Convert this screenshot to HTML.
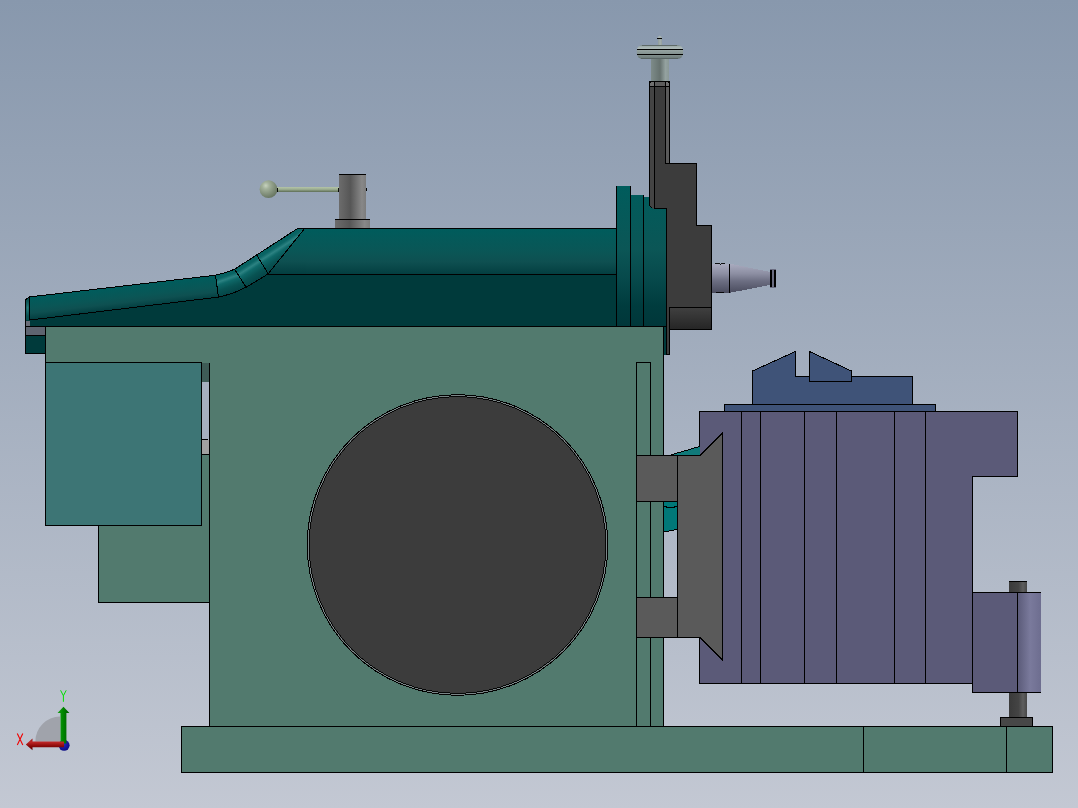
<!DOCTYPE html>
<html><head><meta charset="utf-8">
<style>
html,body{margin:0;padding:0;width:1078px;height:808px;overflow:hidden;}
body{background:linear-gradient(to bottom,#8898ad 0%,#c3c8d3 100%);font-family:"Liberation Sans",sans-serif;}
svg{position:absolute;left:0;top:0;}
</style></head><body>
<svg width="1078" height="808" viewBox="0 0 1078 808">
<defs>
<linearGradient id="ramTop" x1="0" y1="0" x2="0" y2="1">
<stop offset="0" stop-color="#005c5c"/><stop offset="0.5" stop-color="#0a5656"/><stop offset="0.72" stop-color="#0e5051"/><stop offset="1" stop-color="#033e40"/>
</linearGradient>
<linearGradient id="ramLeft" gradientUnits="userSpaceOnUse" x1="120" y1="286.4" x2="122.6" y2="309">
<stop offset="0" stop-color="#005c5c"/><stop offset="0.5" stop-color="#0a5656"/><stop offset="0.72" stop-color="#0e5051"/><stop offset="1" stop-color="#033e40"/>
</linearGradient>
<linearGradient id="bevel" gradientUnits="userSpaceOnUse" x1="225" y1="272.5" x2="232" y2="292.3">
<stop offset="0" stop-color="#04605f"/><stop offset="0.18" stop-color="#0b6565"/><stop offset="0.32" stop-color="#2c8282"/><stop offset="0.46" stop-color="#0e6868"/><stop offset="0.72" stop-color="#085353"/><stop offset="1" stop-color="#054648"/>
</linearGradient>
<linearGradient id="bevel2" gradientUnits="userSpaceOnUse" x1="258" y1="254" x2="269.6" y2="272.1">
<stop offset="0" stop-color="#04605f"/><stop offset="0.18" stop-color="#0b6565"/><stop offset="0.32" stop-color="#2c8282"/><stop offset="0.46" stop-color="#0e6868"/><stop offset="0.72" stop-color="#085353"/><stop offset="1" stop-color="#054648"/>
</linearGradient>
<linearGradient id="flange" gradientUnits="userSpaceOnUse" x1="0" y1="186" x2="0" y2="326">
<stop offset="0" stop-color="#005c5c"/><stop offset="0.45" stop-color="#0b5656"/><stop offset="0.65" stop-color="#074a4c"/><stop offset="0.85" stop-color="#003c3e"/><stop offset="1" stop-color="#00373a"/>
</linearGradient>
<linearGradient id="cone" x1="0" y1="0" x2="0" y2="1">
<stop offset="0" stop-color="#aaacc0"/><stop offset="0.35" stop-color="#8c8ea2"/><stop offset="0.6" stop-color="#6c6e82"/><stop offset="1" stop-color="#4a4c5e"/>
</linearGradient>
<linearGradient id="cylGray" x1="0" y1="0" x2="1" y2="0">
<stop offset="0" stop-color="#6c6c6c"/><stop offset="0.42" stop-color="#565656"/><stop offset="0.85" stop-color="#888888"/><stop offset="1" stop-color="#7c7c7c"/>
</linearGradient>
<linearGradient id="rod" x1="0" y1="0" x2="0" y2="1">
<stop offset="0" stop-color="#b4c4a8"/><stop offset="0.5" stop-color="#9cae92"/><stop offset="1" stop-color="#66765e"/>
</linearGradient>
<radialGradient id="ball" cx="0.35" cy="0.3" r="0.7">
<stop offset="0" stop-color="#c6d2be"/><stop offset="0.28" stop-color="#a2b09a"/><stop offset="1" stop-color="#6a7864"/>
</radialGradient>
<linearGradient id="shaft" x1="0" y1="0" x2="1" y2="0">
<stop offset="0" stop-color="#7e8c8a"/><stop offset="0.5" stop-color="#66726f"/><stop offset="0.8" stop-color="#94a2a0"/><stop offset="1" stop-color="#8a9896"/>
</linearGradient>
<linearGradient id="disk" x1="0" y1="0" x2="0" y2="1">
<stop offset="0" stop-color="#6e7c7a"/><stop offset="0.12" stop-color="#a2b0ae"/><stop offset="0.25" stop-color="#aebab8"/><stop offset="0.38" stop-color="#96a4a2"/><stop offset="0.55" stop-color="#8a9896"/><stop offset="0.75" stop-color="#7e8c8a"/><stop offset="0.9" stop-color="#72807e"/><stop offset="1" stop-color="#5e6a68"/>
</linearGradient>
<linearGradient id="post" x1="0" y1="0" x2="1" y2="0">
<stop offset="0" stop-color="#3a3a3a"/><stop offset="0.55" stop-color="#444"/><stop offset="0.8" stop-color="#5e5e5e"/><stop offset="1" stop-color="#4a4a4a"/>
</linearGradient>
<linearGradient id="rcyl" x1="0" y1="0" x2="1" y2="0">
<stop offset="0" stop-color="#5a5a78"/><stop offset="0.55" stop-color="#7a7a9c"/><stop offset="1" stop-color="#6e6e90"/>
</linearGradient>
<linearGradient id="greenArrow" x1="0" y1="0" x2="1" y2="0">
<stop offset="0" stop-color="#18a018"/><stop offset="0.45" stop-color="#008800"/><stop offset="1" stop-color="#005800"/>
</linearGradient>
<linearGradient id="redArrow" x1="0" y1="0" x2="0" y2="1">
<stop offset="0" stop-color="#901010"/><stop offset="0.3" stop-color="#c02828"/><stop offset="0.65" stop-color="#8a0808"/><stop offset="1" stop-color="#580000"/>
</linearGradient>
<linearGradient id="lowBlock" x1="0" y1="0" x2="0" y2="1">
<stop offset="0" stop-color="#404040"/><stop offset="1" stop-color="#252525"/>
</linearGradient>
<linearGradient id="ramEnd" x1="0" y1="0" x2="1" y2="0">
<stop offset="0" stop-color="#064e50"/><stop offset="0.45" stop-color="#237a7a"/><stop offset="0.7" stop-color="#0a5a5a"/><stop offset="1" stop-color="#054a4c"/>
</linearGradient>
<linearGradient id="ramEndV" x1="0" y1="0" x2="0" y2="1">
<stop offset="0" stop-color="#0a5050"/><stop offset="0.45" stop-color="#2a7e7e"/><stop offset="1" stop-color="#0a5050"/>
</linearGradient>
<radialGradient id="blueBall" cx="0.4" cy="0.35" r="0.7">
<stop offset="0" stop-color="#2a2ac8"/><stop offset="1" stop-color="#0a0a80"/>
</radialGradient>
<linearGradient id="knobStem" x1="0" y1="0" x2="1" y2="0">
<stop offset="0" stop-color="#8c9896"/><stop offset="0.6" stop-color="#a4b0ae"/><stop offset="1" stop-color="#94a09e"/>
</linearGradient>
</defs>

<g stroke="#000" stroke-width="1" shape-rendering="crispEdges">
<!-- ===== base ===== -->
<rect x="181.5" y="726.5" width="871" height="46" fill="#527a6e"/>
<line x1="863.5" y1="726.5" x2="863.5" y2="772.5"/>
<line x1="1006.5" y1="726.5" x2="1006.5" y2="772.5"/>

<!-- ===== body ===== -->
<path d="M45.5 326.5 H663.5 V726.5 H209.5 V602.5 H98.5 V525.5 H45.5 Z" fill="#527a6e"/>
<rect x="201.5" y="362.5" width="8" height="19" fill="#3e5b56" stroke="none"/>
<rect x="201.5" y="381.5" width="8" height="58" fill="#a6afbf" stroke="none"/>
<rect x="201.5" y="439.5" width="8" height="14.5" fill="#a0a0a0" stroke="none"/>
<line x1="201.5" y1="439.5" x2="208" y2="439.5"/>
<line x1="201.5" y1="454.5" x2="209.5" y2="454.5"/>
<line x1="209.5" y1="362.5" x2="209.5" y2="726.5"/>
<rect x="45.5" y="362.5" width="156" height="163" fill="#3d7575"/>
<!-- inner right strip -->
<rect x="636.5" y="362.5" width="14" height="364" fill="#527a6e"/>

<!-- ===== circle ===== -->
<circle cx="457.5" cy="545" r="150.3" fill="#3c3c3c" stroke="#000"/>
<circle cx="457.5" cy="545" r="149.3" fill="none" stroke="#8a9699" stroke-width="0.8"/>
<circle cx="457.5" cy="545" r="148.4" fill="none" stroke="#000" stroke-width="0.9"/>

<!-- ===== ram ===== -->
<path d="M25.5 300 L29 297 L215.6 275.2 Q226 273 234.6 269.2 L278 241.2 L296.9 228.9 Q300 228 304 228.5 H616.5 V326.5 H25.5 Z" fill="#003a3b"/>
<path d="M29 297 L215.6 275.2 L218.4 297.1 L30.3 320 Z" fill="url(#ramLeft)" stroke="none"/>
<path d="M215.6 275.2 Q226 273 234.6 269.2 L246.2 287.4 L232.3 293.5 L218.4 297.1 Z" fill="url(#bevel)" stroke="none"/>
<path d="M234.6 269.2 L278 241.2 L296.9 228.9 Q300 228 304.7 228.4 L268 274 L246.8 286.9 Z" fill="url(#bevel2)" stroke="none"/>
<rect x="304" y="228.5" width="312.5" height="46" fill="url(#ramTop)" stroke="none"/>
<path d="M268 274 L304.7 228.4 H306 V274 Z" fill="url(#ramTop)" stroke="none"/>
<path d="M25.5 300 L29 297 L29.8 297 V320 H25.5 Z" fill="#0a5050" stroke="none"/>
<rect x="26.5" y="301" width="2.2" height="15" fill="url(#ramEndV)" stroke="none" shape-rendering="geometricPrecision"/>
<path d="M25.5 300 L29 297 L215.6 275.2 Q226 273 234.6 269.2 L278 241.2 L296.9 228.9 Q300 228 304 228.5 H616.5" fill="none"/>
<path d="M30.3 320 L218.4 297.1 L232.3 293.5 L246.8 286.9 L268 274 H616.5" fill="none"/>
<line x1="25.5" y1="300" x2="25.5" y2="326.5"/>
<line x1="25.5" y1="326.5" x2="616.5" y2="326.5"/>
<line x1="215.6" y1="275.5" x2="218.4" y2="297.1"/>
<line x1="234.5" y1="269" x2="246.2" y2="287.4"/>
<line x1="256.8" y1="255.1" x2="268" y2="273.5"/>
<line x1="304.7" y1="228.4" x2="268" y2="274"/>
<line x1="29.8" y1="297.4" x2="29.8" y2="320"/>
<rect x="26" y="320.7" width="3.8" height="5.3" fill="#6a6d78" stroke="none"/>

<!-- left under-ram -->
<rect x="25.5" y="326.5" width="20" height="9" fill="#5e6470"/>
<rect x="25.5" y="335.5" width="20" height="18" fill="#003a3b"/>

<!-- ===== flanges ===== -->
<rect x="663.5" y="326" width="3" height="28.5" fill="#003a3b" stroke="none"/>
<line x1="663.5" y1="326" x2="663.5" y2="354.5"/>
<rect x="616.5" y="186" width="14" height="140.5" fill="url(#flange)" stroke="none"/>
<line x1="616.5" y1="186" x2="616.5" y2="326.5"/>
<line x1="630.5" y1="186" x2="630.5" y2="326.5"/>
<path d="M630.5 195 H643.5 V197 H649.5 V205.5 L653.5 208.5 H666.5 V326.5 H630.5 Z" fill="url(#flange)" stroke="none"/>
<line x1="643.5" y1="195" x2="643.5" y2="326.5"/>
<line x1="616.5" y1="326.5" x2="666.5" y2="326.5"/>
<!-- ===== dark head ===== -->
<path d="M649.5 81.5 H669.5 V163.5 H696.5 V225.5 H711.5 V329.5 H669.5 V354.5 H666.5 V208.5 H653.5 L649.5 205.5 Z" fill="#3c3c3c"/>
<path d="M649.5 86.3 H654.5 V208.5 H653.5 L649.5 205.5 Z" fill="#444" stroke="none"/>
<rect x="665.5" y="86.3" width="4" height="76.7" fill="#5a5a5a" stroke="none"/>
<path d="M650 81.5 H668.5 L669.6 84.2 V86.4 H649.4 V84.2 Z" fill="#5c5c5c" stroke="none"/>
<path d="M650 81.5 L649.4 84.2 V86.4 H654.5 V81.5 Z" fill="#707070" stroke="none"/>
<path d="M668.5 81.5 L669.6 84.2 V86.4 H665.5 V81.5 Z" fill="#707070" stroke="none"/>
<path d="M649.5 206 V84.2 L650.3 81.5 H668.5 L669.5 84.2 V163" fill="none"/>
<line x1="654.5" y1="81.5" x2="654.5" y2="208.5"/>
<line x1="665.5" y1="81.5" x2="665.5" y2="163.5"/>
<line x1="665.5" y1="163.5" x2="670" y2="163.5"/>
<line x1="649.5" y1="86.5" x2="669.5" y2="86.5"/>
<rect x="669.8" y="307.5" width="41.7" height="22" fill="url(#lowBlock)"/>

<!-- ===== handwheel ===== -->
<rect x="650.8" y="58.8" width="18.4" height="22.2" fill="url(#shaft)" stroke="none"/>
<rect x="636.8" y="44.9" width="46.3" height="13.9" rx="5.5" fill="url(#disk)" stroke="none" shape-rendering="geometricPrecision"/>
<line x1="637" y1="49.5" x2="683" y2="49.5" stroke-width="1"/>
<line x1="637" y1="54.5" x2="683" y2="54.5" stroke-width="1"/>
<line x1="642" y1="45.5" x2="677" y2="45.5" stroke="#55605e" stroke-width="0.8"/>
<line x1="641" y1="58.5" x2="678" y2="58.5" stroke="#55605e" stroke-width="0.8"/>
<rect x="657.6" y="38.5" width="4.3" height="6.6" fill="url(#knobStem)" stroke="none"/>
<path d="M657.3 38.3 Q658.5 35.6 659.8 35.6 Q661 35.6 662.2 38.3 Z" fill="#a6b2b0" stroke="none" shape-rendering="geometricPrecision"/>
<line x1="657.2" y1="38.2" x2="662.2" y2="38.2" stroke-width="1"/>

<!-- ===== tool cone ===== -->
<path d="M711.7 263.6 H729.7 L770 272 V285 L729.7 292.8 H711.7 Z" fill="url(#cone)" stroke="none"/>
<line x1="729.7" y1="264" x2="729.7" y2="292.5"/>
<rect x="770" y="269" width="5.5" height="18.5" fill="#6a6c80" stroke="none"/>
<line x1="770.9" y1="269.5" x2="770.9" y2="287" stroke-width="1.2"/>
<line x1="775" y1="269.5" x2="775" y2="287" stroke-width="1.2"/>
<path d="M715 263.3 H717.5 Q720 265.5 722.5 263.3 H725" fill="none" stroke-width="0.9"/>
<path d="M716 293 Q720 291.5 724 293" fill="none" stroke-width="0.9"/>

<!-- ===== lever ===== -->
<rect x="339" y="174.3" width="27" height="45" fill="url(#cylGray)" stroke="none"/>
<line x1="339" y1="174.5" x2="366" y2="174.5"/>
<rect x="335.2" y="219.4" width="34.5" height="8.8" fill="url(#cylGray)" stroke="none"/>
<line x1="335.2" y1="219.7" x2="369.7" y2="219.7"/>
<rect x="277.3" y="187" width="61.7" height="4.6" fill="url(#rod)" stroke="none"/>
<circle cx="268.5" cy="189.2" r="8.9" fill="url(#ball)" stroke="none" shape-rendering="geometricPrecision"/>
<line x1="277.6" y1="187.5" x2="277.6" y2="191.5" stroke-width="0.9"/>
<line x1="338.6" y1="187.5" x2="338.6" y2="191.5" stroke-width="0.9"/>
<line x1="366" y1="187.8" x2="366" y2="191.2" stroke-width="1"/>

<!-- ===== vise ===== -->
<path d="M699.5 411.5 H1017.5 V476.5 H972.5 V683.5 H699.5 Z" fill="#5b5a78"/>
<line x1="741.5" y1="411.5" x2="741.5" y2="683.5"/>
<line x1="760.5" y1="411.5" x2="760.5" y2="683.5"/>
<line x1="804.5" y1="411.5" x2="804.5" y2="683.5"/>
<line x1="836.5" y1="411.5" x2="836.5" y2="683.5"/>
<line x1="894.5" y1="411.5" x2="894.5" y2="683.5"/>
<line x1="925.5" y1="411.5" x2="925.5" y2="683.5"/>
<rect x="724.5" y="404.5" width="211" height="7" fill="#3f5378"/>
<path d="M752.5 404.5 V371 L795.5 351.5 V376.5 H912.5 V404.5 Z" fill="#3f5378"/>
<path d="M809.5 351.5 L851.5 371 V381.5 H809.5 Z" fill="#3f5378"/>

<!-- ===== brackets ===== -->
<path d="M669 455.5 L699.5 446.5 V455.5 Z" fill="#107a7a" stroke="none"/>
<line x1="669" y1="455.5" x2="699.5" y2="446.5"/>
<path d="M663.8 501 H677 V529.5 L663.8 532 Z" fill="#007878" stroke="none"/>
<path d="M664 506 Q670.5 509.5 677 506" fill="none"/>
<line x1="664" y1="532" x2="677" y2="529.5"/>
<path d="M677.5 455.5 H700 L722.5 433 V660 L700 637.5 H677.5 Z" fill="#5a5a5a"/>
<rect x="636.5" y="455.5" width="41" height="46" fill="#5a5a5a"/>
<rect x="636.5" y="597.5" width="41" height="40" fill="#5a5a5a"/>

<!-- ===== right post ===== -->
<rect x="1009" y="581.5" width="17.5" height="11" fill="url(#post)" stroke="none"/>
<line x1="1009" y1="581.5" x2="1026.5" y2="581.5"/>
<rect x="1009" y="692.5" width="17.5" height="25" fill="url(#post)" stroke="none"/>
<rect x="1017.5" y="592.5" width="23" height="100" fill="url(#rcyl)" stroke="none"/>
<line x1="1017" y1="592.5" x2="1040.5" y2="592.5"/>
<line x1="1017" y1="692.5" x2="1040.5" y2="692.5"/>
<rect x="972.5" y="592.5" width="45" height="100" fill="#5b5a78"/>
<rect x="1000.5" y="717.5" width="32" height="9" fill="#474747"/>
</g>

<!-- ===== triad ===== -->
<path d="M60 741.4 H35.4 A24.6 24.6 0 0 1 60 716.6 Z" fill="#a0a3ab"/>
<circle cx="64.1" cy="745.3" r="5.5" fill="url(#blueBall)"/>
<path d="M60.5 743.4 V713 H57.5 L63.5 706.7 L69.4 713 H66.4 V743.4 Z" fill="url(#greenArrow)"/>
<path d="M64 741.4 H32.5 V738.4 L25.8 744.4 L32.5 750.3 V747.3 H64 Z" fill="url(#redArrow)"/>
<path d="M60.6 690.3 L63.4 695.8 L66.2 690.3 M63.4 695.8 V701.8" fill="none" stroke="#00e000" stroke-width="1"/>
<path d="M17.3 733.5 L22.8 745 M22.8 733.5 L17.3 745" fill="none" stroke="#f00000" stroke-width="1.1"/>
</svg>
</body></html>
